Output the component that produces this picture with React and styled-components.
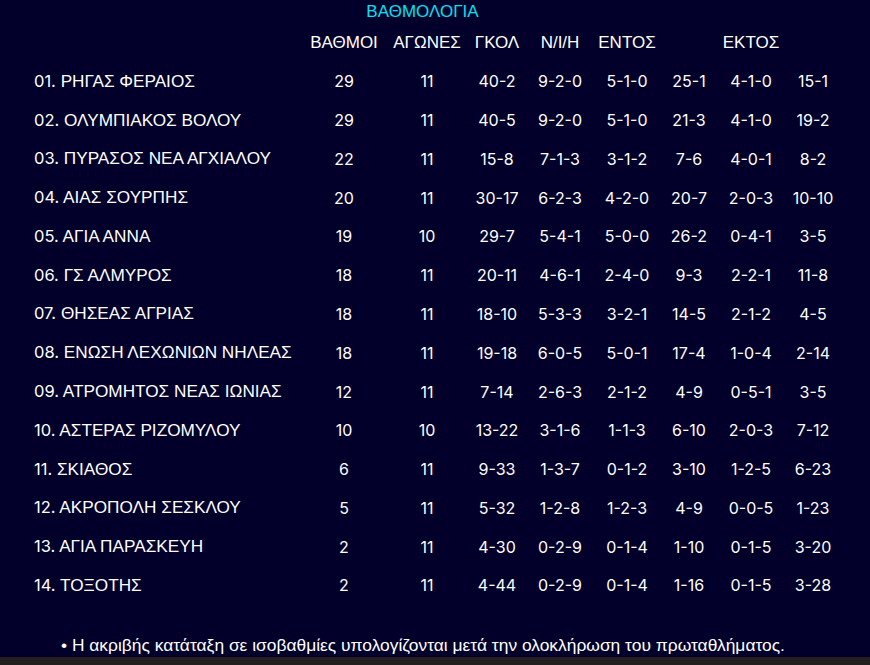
import React from "react";
import styled, { createGlobalStyle } from "styled-components";

const rows = [
  ["01.", "ΡΗΓΑΣ ΦΕΡΑΙΟΣ", "29", "11", "40-2", "9-2-0", "5-1-0", "25-1", "4-1-0", "15-1"],
  ["02.", "ΟΛΥΜΠΙΑΚΟΣ ΒΟΛΟΥ", "29", "11", "40-5", "9-2-0", "5-1-0", "21-3", "4-1-0", "19-2"],
  ["03.", "ΠΥΡΑΣΟΣ ΝΕΑ ΑΓΧΙΑΛΟΥ", "22", "11", "15-8", "7-1-3", "3-1-2", "7-6", "4-0-1", "8-2"],
  ["04.", "ΑΙΑΣ ΣΟΥΡΠΗΣ", "20", "11", "30-17", "6-2-3", "4-2-0", "20-7", "2-0-3", "10-10"],
  ["05.", "ΑΓΙΑ ΑΝΝΑ", "19", "10", "29-7", "5-4-1", "5-0-0", "26-2", "0-4-1", "3-5"],
  ["06.", "ΓΣ ΑΛΜΥΡΟΣ", "18", "11", "20-11", "4-6-1", "2-4-0", "9-3", "2-2-1", "11-8"],
  ["07.", "ΘΗΣΕΑΣ ΑΓΡΙΑΣ", "18", "11", "18-10", "5-3-3", "3-2-1", "14-5", "2-1-2", "4-5"],
  ["08.", "ΕΝΩΣΗ ΛΕΧΩΝΙΩΝ ΝΗΛΕΑΣ", "18", "11", "19-18", "6-0-5", "5-0-1", "17-4", "1-0-4", "2-14"],
  ["09.", "ΑΤΡΟΜΗΤΟΣ ΝΕΑΣ ΙΩΝΙΑΣ", "12", "11", "7-14", "2-6-3", "2-1-2", "4-9", "0-5-1", "3-5"],
  ["10.", "ΑΣΤΕΡΑΣ ΡΙΖΟΜΥΛΟΥ", "10", "10", "13-22", "3-1-6", "1-1-3", "6-10", "2-0-3", "7-12"],
  ["11.", "ΣΚΙΑΘΟΣ", "6", "11", "9-33", "1-3-7", "0-1-2", "3-10", "1-2-5", "6-23"],
  ["12.", "ΑΚΡΟΠΟΛΗ ΣΕΣΚΛΟΥ", "5", "11", "5-32", "1-2-8", "1-2-3", "4-9", "0-0-5", "1-23"],
  ["13.", "ΑΓΙΑ ΠΑΡΑΣΚΕΥΗ", "2", "11", "4-30", "0-2-9", "0-1-4", "1-10", "0-1-5", "3-20"],
  ["14.", "ΤΟΞΟΤΗΣ", "2", "11", "4-44", "0-2-9", "0-1-4", "1-16", "0-1-5", "3-28"],
];

// ΕΝΤΟΣ / ΕΚΤΟΣ sit over the first of their two columns, the second stays blank
const headers = ["ΒΑΘΜΟΙ", "ΑΓΩΝΕΣ", "ΓΚΟΛ", "Ν/Ι/Η", "ΕΝΤΟΣ", "", "ΕΚΤΟΣ", ""];

const GlobalStyle = createGlobalStyle`
  body {
    margin: 0;
    background: #02002a;
    font-family: "Liberation Sans", Arial, sans-serif;
  }
`;

const Page = styled.div`
  width: 870px;
  height: 665px;
  display: flex;
  flex-direction: column;
  background: #02002a;
  color: #ffffff;
`;

const Title = styled.div`
  height: 23px;
  line-height: 23px;
  padding-right: 25px;
  text-align: center;
  font-size: 17px;
  color: #00e1f0;
`;

const Row = styled.div`
  display: grid;
  grid-template-columns: 268px 84px 82px 58px 68px 66px 58px 66px 58px;
  align-items: center;
  padding-left: 34px;
  height: ${(p) => (p.$head ? "39px" : "38.77px")};
  font-size: 17px;
`;

const Team = styled.div`
  white-space: nowrap;
  font-size: 17.2px;
`;

const Rank = styled.span`
  font-family: Inter, "Liberation Sans", sans-serif;
  font-size: 16.5px;
`;

const Head = styled.div`
  text-align: center;
  white-space: nowrap;
`;

const Num = styled.div`
  text-align: center;
  white-space: nowrap;
  font-family: Inter, "Liberation Sans", sans-serif;
  font-size: 16px;
`;

const Note = styled.div`
  margin-top: 30px;
  height: 22px;
  line-height: 20px;
  padding-left: 61px;
  font-size: 17.4px;
  white-space: nowrap;
`;

const Strip = styled.div`
  flex: 1;
  background: #231f20;
`;

export default function App() {
  return (
    <>
      <GlobalStyle />
      <Page>
        <Title>ΒΑΘΜΟΛΟΓΙΑ</Title>
        <Row $head>
          <div />
          {headers.map((h, i) => (
            <Head key={i}>{h}</Head>
          ))}
        </Row>
        {rows.map(([rank, name, ...vals]) => (
          <Row key={rank}>
            <Team>
              <Rank>{rank}</Rank> {name}
            </Team>
            {vals.map((v, i) => (
              <Num key={i}>{v}</Num>
            ))}
          </Row>
        ))}
        <Note>• Η ακριβής κατάταξη σε ισοβαθμίες υπολογίζονται μετά την ολοκλήρωση του πρωταθλήματος.</Note>
        <Strip />
      </Page>
    </>
  );
}
